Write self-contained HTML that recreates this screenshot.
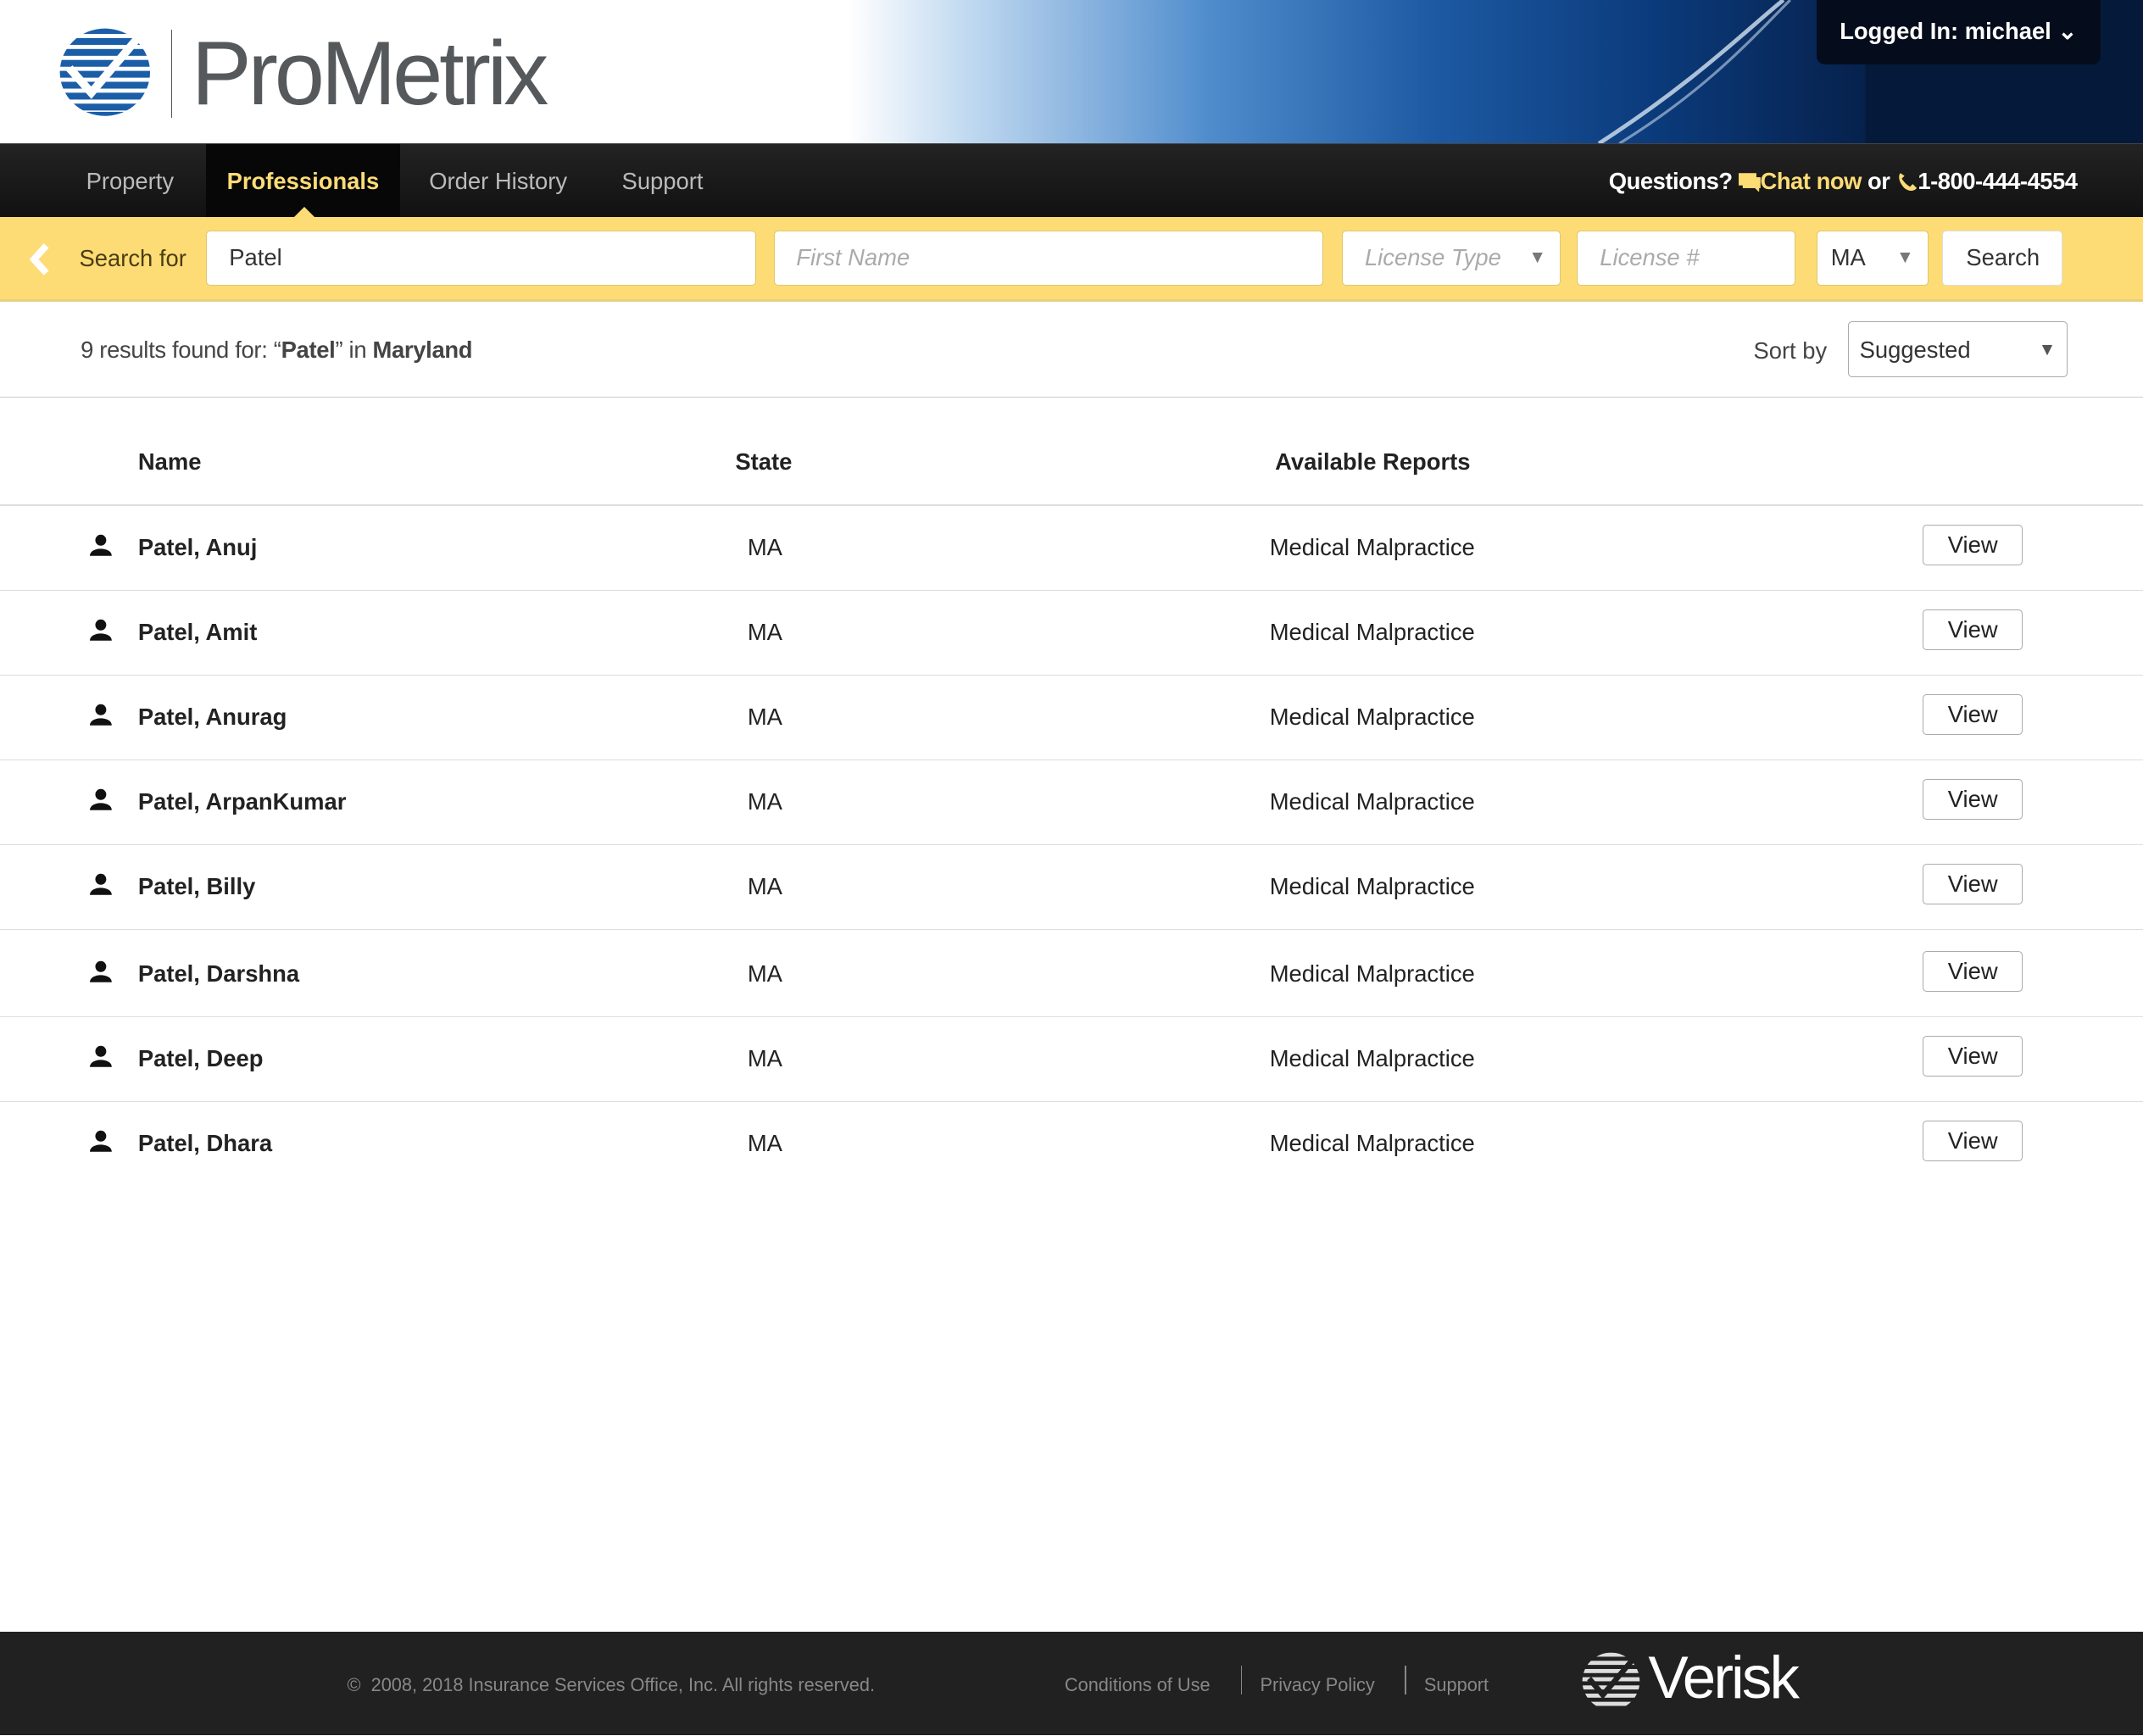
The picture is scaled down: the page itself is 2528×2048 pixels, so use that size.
<!DOCTYPE html>
<html><head><meta charset="utf-8"><style>
html,body{margin:0;padding:0;}
body{width:1568px;height:1270px;zoom:1.6122;font-family:"Liberation Sans",Arial,sans-serif;background:#fff;position:relative;overflow:hidden;color:#222;}
.hdr{position:absolute;left:0;top:0;width:1568px;height:105px;background:#fff;overflow:hidden;}
.hdrbg{position:absolute;left:620px;top:0;width:948px;height:105px;background:linear-gradient(90deg,rgba(255,255,255,1) 0%,#bcd6ef 10%,#4f8ccc 28%,#1d5aa3 45%,#0b3b7c 62%,#061f48 80%,#051a3a 100%);}
.login{position:absolute;left:1329px;top:0;width:208px;height:47px;background:#050d1c;border-radius:0 0 6px 6px;color:#fff;font-weight:bold;font-size:17px;line-height:46px;text-align:center;}
.nav{position:absolute;left:0;top:105px;width:1568px;height:54px;background:linear-gradient(#232323,#111);border-top:1px solid #444;}
.nav span{position:absolute;top:0;line-height:54px;font-size:17px;color:#bbb;}
.act{position:absolute;left:151px;top:0;width:142px;height:54px;background:#070707;}
.q{position:absolute;right:48px;top:0;line-height:54px;font-size:17px;font-weight:bold;color:#fff;letter-spacing:-0.3px}
.srch{position:absolute;left:0;top:159px;width:1568px;height:60px;background:#fddc76;border-bottom:2px solid #e8cf7d;}
.inp{position:absolute;top:10px;height:40px;background:#fff;border:1px solid #e0c56a;border-radius:3px;box-sizing:border-box;font-size:17px;line-height:38px;padding-left:16px;color:#333;}
.ph{color:#aaa;font-style:italic;}
.arr{position:absolute;right:10px;top:0;color:#777;font-size:13px;font-style:normal;}
.res{position:absolute;left:59px;top:246px;font-size:17px;color:#444;letter-spacing:-0.2px}
.sort{position:absolute;left:1283px;top:247px;font-size:17px;color:#444;}
.sel{position:absolute;left:1352px;top:235px;width:161px;height:41px;border:1px solid #aaa;border-radius:3px;box-sizing:border-box;font-size:17px;line-height:41px;padding-left:8px;color:#333;}
.hr{position:absolute;left:0;width:1568px;height:1px;background:#ddd;}
.th{position:absolute;top:328px;font-size:17px;font-weight:bold;color:#222;}
.row{position:absolute;left:0;width:1568px;height:62px;border-bottom:1px solid #ddd;font-size:17px;}
.row .n{position:absolute;left:101px;top:21px;font-weight:bold;}
.row .s{position:absolute;left:547px;top:21px;}
.row .m{position:absolute;left:929px;top:21px;}
.row .v{position:absolute;left:1407px;top:14px;width:73px;height:30px;border:1px solid #aaa;border-radius:3px;box-sizing:border-box;text-align:center;line-height:28px;}
.row svg{position:absolute;left:66px;top:21px;}
.ft{position:absolute;left:0;top:1194px;width:1568px;height:76px;background:#212121;color:#888;font-size:13.5px;}
.ft span{position:absolute;top:31px;}
.sep{position:absolute;top:25px;width:1px;height:21px;background:#888;}
</style></head><body>
<div class="hdr">
<div class="hdrbg"></div>
<svg style="position:absolute;left:1160px;top:0" width="420" height="105"><path d="M10 105 C80 60 120 20 145 0" stroke="#d5e3f2" stroke-width="3" fill="none" opacity=".8"/><path d="M25 105 C90 65 125 25 150 0" stroke="#c0d4ea" stroke-width="2" fill="none" opacity=".6"/><rect x="205" y="0" width="215" height="105" fill="#051a3a"/></svg>
<svg style="position:absolute;left:43px;top:20px" width="68" height="66" viewBox="0 0 68 66"><defs><clipPath id="c"><ellipse cx="34" cy="33" rx="33" ry="32"/></clipPath></defs><g clip-path="url(#c)"><g fill="#1b5ea8"><rect x="0" y="0" width="68" height="5"/><rect x="0" y="8" width="68" height="5"/><rect x="0" y="16" width="68" height="5"/><rect x="0" y="24" width="68" height="5"/><rect x="0" y="32" width="68" height="5"/><rect x="0" y="40" width="68" height="5"/><rect x="0" y="48" width="68" height="5"/><rect x="0" y="56" width="68" height="5"/><rect x="0" y="62" width="68" height="5"/></g></g><path d="M8 30 L24 48 L58 8" stroke="#fff" stroke-width="6" fill="none"/></svg>
<div style="position:absolute;left:125px;top:22px;width:1px;height:64px;background:#555"></div>
<div style="position:absolute;left:140px;top:16px;font-size:66px;color:#55595c;letter-spacing:-2.6px;line-height:76px">ProMetrix</div>
<div class="login">Logged In: michael ⌄</div>
</div>
<div class="nav">
<div class="act"></div>
<span style="left:63px">Property</span>
<span style="left:166px;color:#fddc76;font-weight:bold">Professionals</span>
<span style="left:314px">Order History</span>
<span style="left:455px">Support</span>
<div style="position:absolute;left:215px;top:46px;width:0;height:0;border-left:8px solid transparent;border-right:8px solid transparent;border-bottom:8px solid #fddc76"></div>
<div class="q">Questions? <svg width="16" height="16" style="vertical-align:-2px"><rect x="0" y="2" width="13" height="9" fill="#fddc76"/><rect x="3" y="5" width="13" height="8" fill="#fddc76"/><path d="M12 13 L15 16 L15 12Z" fill="#fddc76"/></svg><span style="position:static;color:#fddc76;line-height:54px">Chat now</span> or <svg width="16" height="16" style="vertical-align:-2px"><path d="M3 2 C1 4 2 9 6 13 C10 16 13 15 15 13 L12 10 L10 12 C8 11 5 8 4 6 L6 4 Z" fill="#fddc76"/></svg>1-800-444-4554</div>
</div>
<div class="srch">
<svg style="position:absolute;left:20px;top:18px" width="18" height="26"><path d="M14 3 L5 13 L14 23" stroke="#fff" stroke-width="5" fill="none"/></svg>
<div style="position:absolute;left:58px;top:20px;font-size:17px;color:#4a3d10">Search for</div>
<div class="inp" style="left:151px;width:402px">Patel</div>
<div class="inp ph" style="left:566px;width:402px">First Name</div>
<div class="inp ph" style="left:982px;width:160px">License Type<span class="arr">▼</span></div>
<div class="inp ph" style="left:1154px;width:160px">License #</div>
<div class="inp" style="left:1329px;width:82px;padding-left:10px">MA<span class="arr">▼</span></div>
<div class="inp" style="left:1421px;width:88px;padding-left:17px;border-color:#ddd">Search</div>
</div>
<div class="res">9 results found for: “<b>Patel</b>” in <b>Maryland</b></div>
<div class="sort">Sort by</div>
<div class="sel">Suggested<span style="position:absolute;right:8px;color:#555;font-size:13px">▼</span></div>
<div class="hr" style="top:290px;background:#ccc"></div>
<div class="th" style="left:101px">Name</div>
<div class="th" style="left:538px">State</div>
<div class="th" style="left:933px">Available Reports</div>
<div class="hr" style="top:369px"></div>
<div class="row" style="top:370px"><svg width="16" height="16"><circle cx="8" cy="4.5" r="4" fill="#111"/><path d="M0 16 C0 9 16 9 16 16Z" fill="#111"/></svg><span class="n">Patel, Anuj</span><span class="s">MA</span><span class="m">Medical Malpractice</span><span class="v">View</span></div>
<div class="row" style="top:432px"><svg width="16" height="16"><circle cx="8" cy="4.5" r="4" fill="#111"/><path d="M0 16 C0 9 16 9 16 16Z" fill="#111"/></svg><span class="n">Patel, Amit</span><span class="s">MA</span><span class="m">Medical Malpractice</span><span class="v">View</span></div>
<div class="row" style="top:494px"><svg width="16" height="16"><circle cx="8" cy="4.5" r="4" fill="#111"/><path d="M0 16 C0 9 16 9 16 16Z" fill="#111"/></svg><span class="n">Patel, Anurag</span><span class="s">MA</span><span class="m">Medical Malpractice</span><span class="v">View</span></div>
<div class="row" style="top:556px"><svg width="16" height="16"><circle cx="8" cy="4.5" r="4" fill="#111"/><path d="M0 16 C0 9 16 9 16 16Z" fill="#111"/></svg><span class="n">Patel, ArpanKumar</span><span class="s">MA</span><span class="m">Medical Malpractice</span><span class="v">View</span></div>
<div class="row" style="top:618px"><svg width="16" height="16"><circle cx="8" cy="4.5" r="4" fill="#111"/><path d="M0 16 C0 9 16 9 16 16Z" fill="#111"/></svg><span class="n">Patel, Billy</span><span class="s">MA</span><span class="m">Medical Malpractice</span><span class="v">View</span></div>
<div class="row" style="top:682px"><svg width="16" height="16"><circle cx="8" cy="4.5" r="4" fill="#111"/><path d="M0 16 C0 9 16 9 16 16Z" fill="#111"/></svg><span class="n">Patel, Darshna</span><span class="s">MA</span><span class="m">Medical Malpractice</span><span class="v">View</span></div>
<div class="row" style="top:744px"><svg width="16" height="16"><circle cx="8" cy="4.5" r="4" fill="#111"/><path d="M0 16 C0 9 16 9 16 16Z" fill="#111"/></svg><span class="n">Patel, Deep</span><span class="s">MA</span><span class="m">Medical Malpractice</span><span class="v">View</span></div>
<div class="row" style="top:806px;border-bottom:none"><svg width="16" height="16"><circle cx="8" cy="4.5" r="4" fill="#111"/><path d="M0 16 C0 9 16 9 16 16Z" fill="#111"/></svg><span class="n">Patel, Dhara</span><span class="s">MA</span><span class="m">Medical Malpractice</span><span class="v">View</span></div>
<div class="ft">
<span style="left:254px">©&nbsp; 2008, 2018 Insurance Services Office, Inc. All rights reserved.</span>
<span style="left:779px">Conditions of Use</span><div class="sep" style="left:908px"></div>
<span style="left:922px">Privacy Policy</span><div class="sep" style="left:1028px"></div>
<span style="left:1042px">Support</span>
<svg style="position:absolute;left:1157px;top:14px" width="44" height="44" viewBox="0 0 44 44"><defs><clipPath id="v"><ellipse cx="22" cy="22" rx="21" ry="21"/></clipPath></defs><g clip-path="url(#v)" fill="#ddd"><rect y="1" width="44" height="3"/><rect y="7" width="44" height="3"/><rect y="13" width="44" height="3"/><rect y="19" width="44" height="3"/><rect y="25" width="44" height="3"/><rect y="31" width="44" height="3"/><rect y="37" width="44" height="3"/></g><path d="M6 20 L16 32 L38 6" stroke="#212121" stroke-width="4" fill="none"/></svg>
<div style="position:absolute;left:1206px;top:9px;font-size:44px;color:#fff;letter-spacing:-1.8px">Verisk</div>
</div>
</body></html>
